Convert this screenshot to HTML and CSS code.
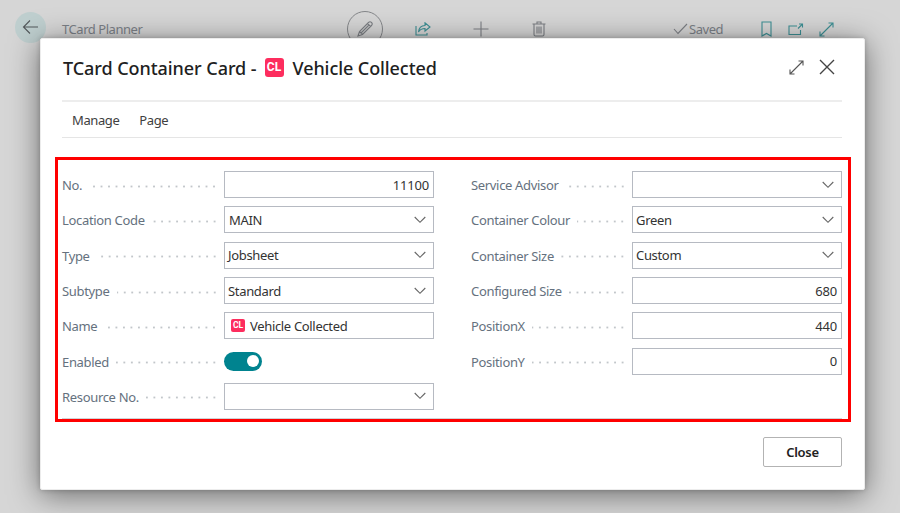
FILE: index.html
```html
<!DOCTYPE html>
<html lang="en">
<head>
<meta charset="utf-8">
<title>TCard Container Card</title>
<link rel="stylesheet" href="styles.css">
</head>
<body>
<header class="topbar">
  <span class="back"><svg width="18" height="16" viewBox="0 0 18 16"><path d="M16 8H1.500M8 1.500L1.500 8L8 14.500"/></svg></span>
  <span class="page-name">TCard Planner</span>
  <span class="edit"><svg width="18" height="18" viewBox="0 0 18 18"><path d="M2 16L3.500 11.500L12.500 2.500Q14 1 15.500 2.500T15.500 5.500L6.500 14.500ZM3.500 11.500L6.500 14.500M11.500 3.500L14.500 6.500M5 13L13 5"/></svg></span>
  <svg class="share teal" width="16" height="15" viewBox="0 0 16 15"><path d="M1 4V13H12V11M3.500 10C4 5.500 6.500 3.500 10 3.500V.8L15 5L10 9V6.500C7 6.500 5 7.500 3.500 10Z"/></svg>
  <svg class="plus" width="16" height="16" viewBox="0 0 16 16"><path d="M8 .5V15.500M.5 8H15.500"/></svg>
  <svg class="trash" width="14" height="16" viewBox="0 0 14 16"><path d="M.5 3H13.500M5 3V1H9V3M2 3V13.500Q2 15 3.500 15H10.500Q12 15 12 13.500V3M5 5.500V12.500M7 5.500V12.500M9 5.500V12.500"/></svg>
  <span class="saved"><svg width="15" height="12" viewBox="0 0 15 12"><path d="M1 6L5 10.500L14 1"/></svg><span>Saved</span></span>
  <svg class="bookmark teal" width="11" height="16" viewBox="0 0 11 16"><path d="M1 1H10V15L5.500 12.500L1 15Z"/></svg>
  <svg class="popout teal" width="16" height="13" viewBox="0 0 16 13"><path d="M9 3H1V11.500H12.500V7M10 5.500L14.500 1M11 1H14.500V4.500"/></svg>
  <svg class="grow teal" width="15" height="15" viewBox="0 0 15 15"><path d="M1 14L14 1M9.500 1H14V5.500M1 9.500V14H5.500"/></svg>
</header>

<main class="dialog">
  <div class="title-row">
    <h1><span class="t1">TCard Container Card -</span><span class="badge">CL</span><span class="t2">Vehicle Collected</span></h1>
    <svg class="expand" width="15" height="15" viewBox="0 0 15 15"><path d="M1 14L14 1M9.500 1H14V5.500M1 9.500V14H5.500"/></svg>
    <svg class="close-x" width="16" height="16" viewBox="0 0 16 16"><path d="M1 1L15 15M15 1L1 15"/></svg>
  </div>
  <nav class="menu"><span class="manage">Manage</span><span>Page</span></nav>

  <section class="form">
    <div class="column">
      <div class="row"><label>No.</label><i class="dots"></i><div class="field num">11100</div></div>
      <div class="row"><label>Location Code</label><i class="dots"></i><div class="field lookup">MAIN<svg class="chev" width="12" height="8" viewBox="0 0 12 8"><path d="M.7 1L6 6.300L11.300 1"/></svg></div></div>
      <div class="row"><label>Type</label><i class="dots"></i><div class="field">Jobsheet<svg class="chev" width="12" height="8" viewBox="0 0 12 8"><path d="M.7 1L6 6.300L11.300 1"/></svg></div></div>
      <div class="row"><label>Subtype</label><i class="dots"></i><div class="field">Standard<svg class="chev" width="12" height="8" viewBox="0 0 12 8"><path d="M.7 1L6 6.300L11.300 1"/></svg></div></div>
      <div class="row"><label>Name</label><i class="dots"></i><div class="field"><span class="badge small">CL</span>Vehicle Collected</div></div>
      <div class="row"><label>Enabled</label><i class="dots"></i><div class="switch-cell"><span class="switch"></span></div></div>
      <div class="row"><label>Resource No.</label><i class="dots"></i><div class="field"><svg class="chev" width="12" height="8" viewBox="0 0 12 8"><path d="M.7 1L6 6.300L11.300 1"/></svg></div></div>
    </div>
    <div class="column">
      <div class="row"><label>Service Advisor</label><i class="dots"></i><div class="field"><svg class="chev" width="12" height="8" viewBox="0 0 12 8"><path d="M.7 1L6 6.300L11.300 1"/></svg></div></div>
      <div class="row"><label>Container Colour</label><i class="dots"></i><div class="field">Green<svg class="chev" width="12" height="8" viewBox="0 0 12 8"><path d="M.7 1L6 6.300L11.300 1"/></svg></div></div>
      <div class="row"><label>Container Size</label><i class="dots"></i><div class="field">Custom<svg class="chev" width="12" height="8" viewBox="0 0 12 8"><path d="M.7 1L6 6.300L11.300 1"/></svg></div></div>
      <div class="row"><label>Configured Size</label><i class="dots"></i><div class="field num">680</div></div>
      <div class="row"><label>PositionX</label><i class="dots"></i><div class="field num">440</div></div>
      <div class="row"><label>PositionY</label><i class="dots"></i><div class="field num">0</div></div>
    </div>
    <hr>
  </section>
  <footer class="actions"><button>Close</button></footer>
</main>
</body>
</html>
```
FILE: styles.css
```css
* { box-sizing: border-box; }
body {
  margin: 0;
  width: 900px;
  height: 513px;
  overflow: hidden;
  background: #d6d6d6;
  font: 13px/18px "Noto Sans", "Open Sans", sans-serif;
  color: #333;
}
svg { fill: none; stroke: #7c7f84; stroke-width: 1.1; flex: none; display: block; }

.topbar { display: flex; align-items: center; height: 58px; padding-left: 15px; color: #7b8087; }
.topbar .teal { stroke: #3d8f94; }
.back {
  display: flex; align-items: center; justify-content: center;
  width: 31px; height: 31px; margin: -4px 16px 0 0;
  border-radius: 50%; background: #bfcfcf;
}
.back svg { stroke: #53585b; }
.page-name { width: 285px; letter-spacing: -.45px; }
.edit {
  display: flex; align-items: center; justify-content: center;
  width: 36px; height: 36px; border: 1px solid #85878a; border-radius: 50%; margin-right: 32px;
}
.share { margin-right: 42px; }
.plus { margin-right: 43px; }
.trash { margin-right: 127px; }
.saved { display: flex; align-items: center; gap: 1px; width: 88px; letter-spacing: -.45px; }
.bookmark { margin-right: 16px; }
.popout { margin-right: 15px; }

.dialog {
  position: absolute; left: 40px; top: 38px;
  display: flex; flex-direction: column;
  width: 825px; height: 452px; padding: 0 22px 0 15px;
  background: #fff; border: 1px solid #ececec; border-radius: 2px;
  box-shadow: 0 5px 30px rgba(0, 0, 0, .5), 0 0 5px rgba(0, 0, 0, .2);
}
.title-row {
  display: flex; align-items: center; height: 63px; margin-left: 6px; padding-bottom: 5px;
  border-bottom: 2px solid #ededed;
}
h1 {
  display: flex; align-items: center; flex: 1; margin: 0; padding-top: 1px;
  font-size: 18px; line-height: 26px; font-weight: 500; color: #212121;
}
.t1 { padding-left: 1px; letter-spacing: -.06px; }
.t2 { letter-spacing: -.08px; }
.badge {
  display: flex; align-items: center; justify-content: center;
  width: 19px; height: 19px; margin: 0 9px 0 8px;
  border-radius: 3px; background: #fd2d5e; color: #fff;
  font: bold 12px/19px Roboto, sans-serif; letter-spacing: 0;
}
.badge.small { width: 14px; height: 13px; margin: 0 5px 0 3px; border-radius: 2px; font-size: 8.5px; line-height: 13px; }
.expand { margin-right: 15px; stroke: #555; }
.close-x { margin-right: 7px; stroke: #444; stroke-width: 1.4; }
.menu {
  display: flex; align-items: center; gap: 20px; height: 36px;
  margin-left: 6px; padding: 1px 0 0 10px; border-bottom: 1px solid #e5e5e5;
  color: #404040; letter-spacing: -.4px;
}
.form {
  display: flex; flex-wrap: wrap; align-content: flex-start; column-gap: 37px;
  width: 796px; height: 265px; flex: none;
  margin: 19px 0 0 -1px; padding: 7px 5px 0 4px; border: 3px solid #f00;
}
.column { width: 372px; height: 251px; }
.column + .column { width: 371px; }
.form hr { width: 780px; height: 1px; margin: 0; border: 0; background: #d0d3d7; }
.row { display: flex; align-items: center; height: 35.3px; color: #65717e; letter-spacing: -.33px; }
label { padding-top: 1px; margin-right: 7px; }
.dots {
  flex: 1; height: 3px; margin: 3px 6px 0 0;
  background: radial-gradient(circle, #c2c6ca .8px, transparent 1.3px) right center / 7.500px 3px repeat-x;
}
.field, .switch-cell { width: 210px; height: 27px; }
.field {
  display: flex; align-items: center; padding: 0 7px 0 3px;
  border: 1px solid #b6bac2; color: #333;
}
.field.lookup { padding-left: 4px; }
.field.num { justify-content: flex-end; padding-right: 4px; letter-spacing: -.2px; }
.chev { margin-left: auto; stroke: #666; }
.switch-cell { display: flex; align-items: center; }
.switch {
  display: flex; align-items: center; justify-content: flex-end;
  width: 38px; height: 19px; padding-right: 3px; border-radius: 10px; background: #00838f;
}
.switch::after { content: ""; width: 12px; height: 12px; border-radius: 50%; background: #fff; }
.actions { display: flex; justify-content: flex-end; padding-top: 15px; }
button {
  width: 79px; height: 30px; padding: 0; border: 1px solid #b3b3b3; border-radius: 2px;
  background: #fff; color: #212121; font: 600 13px/18px "Noto Sans", sans-serif; letter-spacing: -.3px;
}
```
